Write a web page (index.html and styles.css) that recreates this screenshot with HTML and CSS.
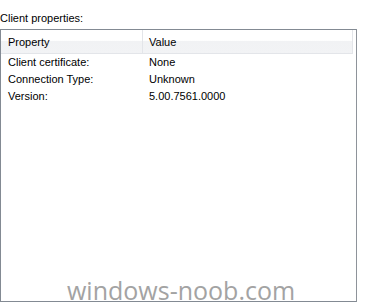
FILE: index.html
```html
<!DOCTYPE html>
<html>
<head>
  <meta charset="UTF-8">
  <title>Client properties</title>
  <link rel="stylesheet" href="styles.css">
</head>
<body>
  <div class="caption">Client properties:</div>
  <div class="listview">
    <div class="header">
      <div class="col col-prop">Property</div>
      <div class="col col-val">Value</div>
    </div>
    <div class="row"><span class="col-prop">Client certificate:</span><span class="col-val">None</span></div>
    <div class="row"><span class="col-prop">Connection Type:</span><span class="col-val">Unknown</span></div>
    <div class="row"><span class="col-prop">Version:</span><span class="col-val">5.00.7561.0000</span></div>
  </div>
  <div class="watermark">windows-noob.com</div>
</body>
</html>
```

FILE: styles.css
```css
body {
  margin: 0;
  width: 365px;
  height: 307px;
  background: #fff;
  font-family: "Liberation Sans", Arial, sans-serif;
  font-size: 11px;
  color: #000;
  position: relative;
  overflow: hidden;
}
.caption {
  padding: 11px 0 0 0;
  height: 18px;
  line-height: 14px;
}
.listview {
  width: 355px;
  height: 271px;
  border: 1px solid #838a93;
  border-right-color: #8e939a;
}
.header {
  display: flex;
  height: 23px;
  margin-right: 3px;
  background: linear-gradient(#ffffff 0%, #ffffff 45%, #f1f2f4 50%, #f2f3f5 100%);
  border-bottom: 1px solid #e3e5e9;
  border-right: 1px solid #e3e5e9;
}
.header .col {
  line-height: 25px;
}
.header .col-prop {
  width: 134px;
  padding-left: 7px;
  border-right: 1px solid #e3e5e9;
}
.header .col-val {
  padding-left: 6px;
}
.row {
  display: flex;
  height: 17px;
  line-height: 17px;
}
.row .col-prop {
  width: 141px;
  padding-left: 7px;
}
.row .col-val {
  padding-left: 0;
}
.row:first-of-type {
  margin-top: 2px;
}
.watermark {
  position: absolute;
  left: 67px;
  top: 277px;
  font-family: "Open Sans", sans-serif;
  font-size: 25px;
  line-height: 26px;
  color: #a3a3a3;
}
```
